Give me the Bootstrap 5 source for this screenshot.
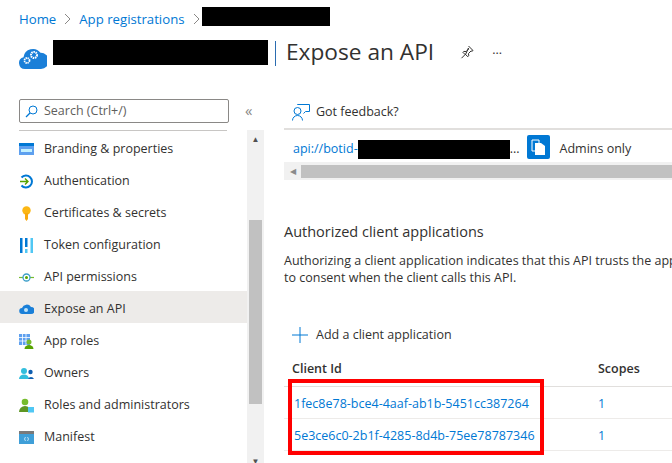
<!DOCTYPE html>
<html lang="en">
<head>
    <meta charset="UTF-8">
    <meta name="viewport" content="width=device-width, initial-scale=1.0">
    <title>Expose an API</title>
    <link href="https://cdn.jsdelivr.net/npm/bootstrap@5.3.3/dist/css/bootstrap.min.css" rel="stylesheet">
    <style>
        html, body { height: 463px; overflow: hidden; }
        body { font-family: "Open Sans", "Noto Sans", sans-serif; font-size: 12.5px; color: #323130; background: #fff; }
        a { color: #0078d4; text-decoration: none; }
        .redact { background: #000; flex: none; }
        .crumbs { height: 37px; padding-left: 19px; font-size: 13.2px; }
        .crumbs a { line-height: 19px; margin-top: 10px; }
        .crumb-sep { margin: 13px 7px 0 8px; }
        .crumb-last { margin-right: 1px; }
        .crumb-redact { width: 128px; height: 19px; margin-top: 7px; }
        .title-row { height: 55px; padding-left: 19px; }
        .title-logo { margin: 11px 6px 0 0; flex: none; }
        .title-redact { width: 215px; height: 25px; margin-top: 3px; }
        .title-bar { width: 1px; height: 25px; background: #2b6cb0; margin: 4px 10px 0 7px; flex: none; }
        .title-text { font-size: 22.7px; line-height: 28px; white-space: nowrap; margin-top: 1px; }
        .title-pin { margin: 7px 0 0 25px; }
        .title-more { margin: 7px 0 0 17px; line-height: 20px; }
        .pane-row { height: 371px; }
        .side { width: 264px; flex: none; }
        .side-top { height: 38px; padding: 7px 0 0 19px; }
        .search-box { width: 210px; height: 24px; border: 1px solid #8a8886; border-radius: 2px; padding: 1px 0 0 5px; color: #605e5c; gap: 6px; }
        .collapse-mark { margin: 4px 0 0 16px; color: #8a8886; font-size: 15px; line-height: 1; }
        .side-body { height: 340px; }
        .menu-col { width: 247px; flex: none; }
        .menu-rule { height: 1px; background: #c8c6c4; margin: 0 20px 0 19px; }
        .menu-item { height: 32px; padding: 4px 0 0 19px; gap: 10px; color: #323130; }
        .menu-on { background: #edebe9; }
        .menu-ico { width: 15px; height: 15px; flex: none; }
        .vbar { width: 17px; flex: none; background: #f1f1f1; padding: 0 2px; }
        .vbar-arrow { height: 18px; font-size: 8px; line-height: 18px; color: #505050; text-align: center; }
        .vbar-gap { height: 72px; }
        .vbar-thumb { height: 184px; background: #c1c1c1; }
        .vbar-rest { flex: 1; }
        .main { flex: 1; min-width: 0; padding-left: 20px; overflow: hidden; }
        .feed-row { height: 36px; border-bottom: 2px solid #e1dfdd; padding: 2px 0 0 8px; gap: 6px; margin-top: 2px; }
        .api-row { height: 32px; padding: 6px 0 0 9px; white-space: nowrap; }
        .copy-btn { width: 23px; height: 24px; background: #0078d4; border-radius: 2px; margin: 0 0 4px 7px; flex: none; }
        .api-scope { margin-left: 10px; }
        .hbar { height: 18px; background: #f1f1f1; }
        .hbar-arrow { width: 17px; text-align: center; font-size: 8px; line-height: 18px; color: #8a8a8a; flex: none; }
        .hbar-thumb { height: 13px; background: #c1c1c1; margin-top: 3px; }
        .sec-title { font-size: 14.5px; margin: 42px 0 0; line-height: 20px; font-weight: 400; }
        .sec-text { width: 480px; margin: 10px 0 0; line-height: 17px; white-space: nowrap; }
        .add-row { height: 20px; margin-top: 39px; padding-left: 8px; gap: 8px; }
        .ids { width: 480px; border-collapse: collapse; margin-top: 8px; }
        .ids th { font-weight: 600; height: 33px; padding: 0 0 0 8px; border-bottom: 1px solid #e1dfdd; }
        .ids td { height: 32px; padding: 5px 0 0 10px; border-bottom: 1px solid #edebe9; }
        .ids th + th, .ids td + td { padding-left: 0; }
        .ids-first { width: 314px; }
        .mark-box { position: absolute; left: 288px; top: 379px; width: 256px; height: 76px; border: 4px solid #f00; pointer-events: none; }
    </style>
</head>
<body class="position-relative">
    <div class="crumbs d-flex align-items-start">
        <a href="#">Home</a>
        <svg class="crumb-sep" width="8" height="12" viewBox="0 0 8 12"><path d="M1 1l5 5-5 5" fill="none" stroke="#8a8886"/></svg>
        <a href="#">App registrations</a>
        <svg class="crumb-sep crumb-last" width="8" height="12" viewBox="0 0 8 12"><path d="M1 1l5 5-5 5" fill="none" stroke="#8a8886"/></svg>
        <div class="redact crumb-redact"></div>
    </div>
    <div class="title-row d-flex align-items-start">
        <svg class="title-logo" width="28" height="21" viewBox="0 0 28 21">
            <path d="M6 21a6 6 0 0 1-1.500-11.800 9.500 9.500 0 0 1 17-4.400A8 8 0 0 1 22 21z" fill="#1a7fd8"/>
            <circle cx="8" cy="12.500" r="2.500" fill="none" stroke="#fff" stroke-width="1.800" stroke-dasharray="1.400 .6"/>
            <circle cx="15" cy="7" r="3" fill="none" stroke="#fff" stroke-width="2" stroke-dasharray="1.500 .7"/>
        </svg>
        <div class="redact title-redact"></div>
        <div class="title-bar"></div>
        <span class="title-text">Expose an API</span>
        <svg class="title-pin" width="16" height="16" viewBox="0 0 16 16"><path d="M9.500 2l4.500 4.500-1 .7-1-.2-2.500 2.500.2 2.300-.9.9-2.400-2.400-3.900 3.900M6.400 10.800 3.900 8.300l.9-.9 2.300.2 2.500-2.500-.2-1z" fill="none" stroke="#323130"/></svg>
        <span class="title-more">···</span>
    </div>
    <div class="pane-row d-flex">
        <div class="side">
            <div class="side-top d-flex align-items-start">
                <div class="search-box d-flex align-items-center">
                    <svg width="13" height="13" viewBox="0 0 13 13"><circle cx="8" cy="5" r="4" fill="none" stroke="#0078d4"/><path d="M5 8l-4 4" stroke="#0078d4" stroke-width="1.200"/></svg>
                    <span>Search (Ctrl+/)</span>
                </div>
                <span class="collapse-mark">«</span>
            </div>
            <div class="side-body d-flex">
                <div class="menu-col">
                    <div class="menu-rule"></div>
                    <a class="menu-item d-flex align-items-center" href="#">
                        <svg class="menu-ico" viewBox="0 0 15 15"><rect y="1" width="15" height="12" fill="#5ea0ef"/><rect y="1" width="15" height="3" fill="#0078d4"/><rect x="2" y="7" width="11" height="3" fill="#c3f1ff"/></svg>
                        <span>Branding &amp; properties</span>
                    </a>
                    <a class="menu-item d-flex align-items-center" href="#">
                        <svg class="menu-ico" viewBox="0 0 15 15"><path d="M2.500 3.500a6 6 0 1 1 0 8" fill="none" stroke="#0078d4" stroke-width="2"/><path d="M1 7.500h8M6 4.500l3 3-3 3" fill="none" stroke="#57a300" stroke-width="1.400"/></svg>
                        <span>Authentication</span>
                    </a>
                    <a class="menu-item d-flex align-items-center" href="#">
                        <svg class="menu-ico" viewBox="0 0 15 15"><circle cx="7.500" cy="4.500" r="4.200" fill="#fcb714"/><path d="M6 7h3v6l-1.500 2L6 13z" fill="#f8a90f"/></svg>
                        <span>Certificates &amp; secrets</span>
                    </a>
                    <a class="menu-item d-flex align-items-center" href="#">
                        <svg class="menu-ico" viewBox="0 0 15 15"><rect x="1" width="2.500" height="15" fill="#0078d4"/><rect x="6" width="2.500" height="9" fill="#0078d4"/><rect x="6" y="11" width="2.500" height="4" fill="#50c7f4"/><rect x="11.500" width="2.500" height="15" fill="#50c7f4"/></svg>
                        <span>Token configuration</span>
                    </a>
                    <a class="menu-item d-flex align-items-center" href="#">
                        <svg class="menu-ico" viewBox="0 0 15 15"><path d="M0 7.500h15" stroke="#76bc2d" stroke-width="1.200"/><circle cx="7.500" cy="7.500" r="3.500" fill="#fff" stroke="#3b9ec9" stroke-width="1.300"/><circle cx="7.500" cy="7.500" r="1.500" fill="#57a300"/></svg>
                        <span>API permissions</span>
                    </a>
                    <a class="menu-item menu-on d-flex align-items-center" href="#">
                        <svg class="menu-ico" viewBox="0 0 15 15"><path d="M3.500 12a3 3 0 0 1-.5-6 5 5 0 0 1 9-1 3.500 3.500 0 0 1 0 7z" fill="#1a7fd8"/><circle cx="7" cy="8" r="2" fill="#bfe3f8"/></svg>
                        <span>Expose an API</span>
                    </a>
                    <a class="menu-item d-flex align-items-center" href="#">
                        <svg class="menu-ico" viewBox="0 0 15 15"><rect width="11" height="11" fill="#5ea0ef"/><path d="M3.500 0v11M7 0v11M0 3.500h11M0 7h11" stroke="#fff" stroke-width=".8"/><circle cx="10" cy="8" r="2.500" fill="#76bc2d"/><path d="M5.500 15a4.500 4 0 0 1 9 0z" fill="#57a300"/></svg>
                        <span>App roles</span>
                    </a>
                    <a class="menu-item d-flex align-items-center" href="#">
                        <svg class="menu-ico" viewBox="0 0 15 15"><circle cx="5" cy="5" r="3" fill="#32bedd"/><path d="M0 13a5 4.500 0 0 1 10 0z" fill="#32bedd"/><circle cx="11.500" cy="6" r="2.200" fill="#0f5fb0"/><path d="M9 13a3.500 4 0 0 1 6 0z" fill="#0f5fb0"/></svg>
                        <span>Owners</span>
                    </a>
                    <a class="menu-item d-flex align-items-center" href="#">
                        <svg class="menu-ico" viewBox="0 0 15 15"><circle cx="6" cy="4" r="3.300" fill="#76bc2d"/><path d="M0 14a6 6 0 0 1 12 0z" fill="#5e9624"/><rect x="9" y="9" width="6" height="5.500" fill="#50c7f4"/></svg>
                        <span>Roles and administrators</span>
                    </a>
                    <a class="menu-item d-flex align-items-center" href="#">
                        <svg class="menu-ico" viewBox="0 0 15 15"><rect y="1" width="15" height="13" fill="#3f9fd8"/><rect y="1" width="15" height="3" fill="#7a7a7a"/><path d="M6.500 7l-1 2 1 2M8.500 7l1 2-1 2" fill="none" stroke="#dff3fc" stroke-width=".8"/></svg>
                        <span>Manifest</span>
                    </a>
                </div>
                <div class="vbar d-flex flex-column">
                    <div class="vbar-arrow">▲</div>
                    <div class="vbar-gap"></div>
                    <div class="vbar-thumb"></div>
                    <div class="vbar-rest"></div>
                    <div class="vbar-arrow">▼</div>
                </div>
            </div>
        </div>
        <div class="main">
            <div class="feed-row d-flex align-items-center">
                <svg width="18" height="17" viewBox="0 0 18 17"><circle cx="5.500" cy="7" r="3.500" fill="none" stroke="#0078d4"/><path d="M.5 16.500a5 5 0 0 1 10 0M5.500 1V.5h12v7h-4l-2 2" fill="none" stroke="#0078d4"/></svg>
                <span>Got feedback?</span>
            </div>
            <div class="api-row d-flex align-items-center">
                <a href="#">api://botid-</a>
                <div class="redact" style="width:152px;height:19px"></div>
                <span>...</span>
                <div class="copy-btn d-flex align-items-center justify-content-center">
                    <svg width="15" height="17" viewBox="0 0 15 17"><path d="M1 1h7v11H1z" fill="none" stroke="#fff"/><path d="M4 4h6l4 3v9H4z" fill="#fff"/></svg>
                </div>
                <span class="api-scope">Admins only</span>
            </div>
            <div class="hbar d-flex">
                <div class="hbar-arrow">◀</div>
                <div class="hbar-thumb flex-grow-1"></div>
            </div>
            <h2 class="sec-title">Authorized client applications</h2>
            <p class="sec-text">Authorizing a client application indicates that this API trusts the application and users should not be asked<br>to consent when the client calls this API.</p>
            <div class="add-row d-flex align-items-center">
                <svg width="16" height="16" viewBox="0 0 16 16"><path d="M8 0v16M0 8h16" stroke="#0078d4"/></svg>
                <span>Add a client application</span>
            </div>
            <table class="ids">
                <tr><th class="ids-first">Client Id</th><th>Scopes</th></tr>
                <tr><td><a href="#">1fec8e78-bce4-4aaf-ab1b-5451cc387264</a></td><td><a href="#">1</a></td></tr>
                <tr><td><a href="#">5e3ce6c0-2b1f-4285-8d4b-75ee78787346</a></td><td><a href="#">1</a></td></tr>
            </table>
        </div>
    </div>
    <div class="mark-box"></div>
    <script src="https://cdn.jsdelivr.net/npm/bootstrap@5.3.3/dist/js/bootstrap.bundle.min.js"></script>
</body>
</html>
